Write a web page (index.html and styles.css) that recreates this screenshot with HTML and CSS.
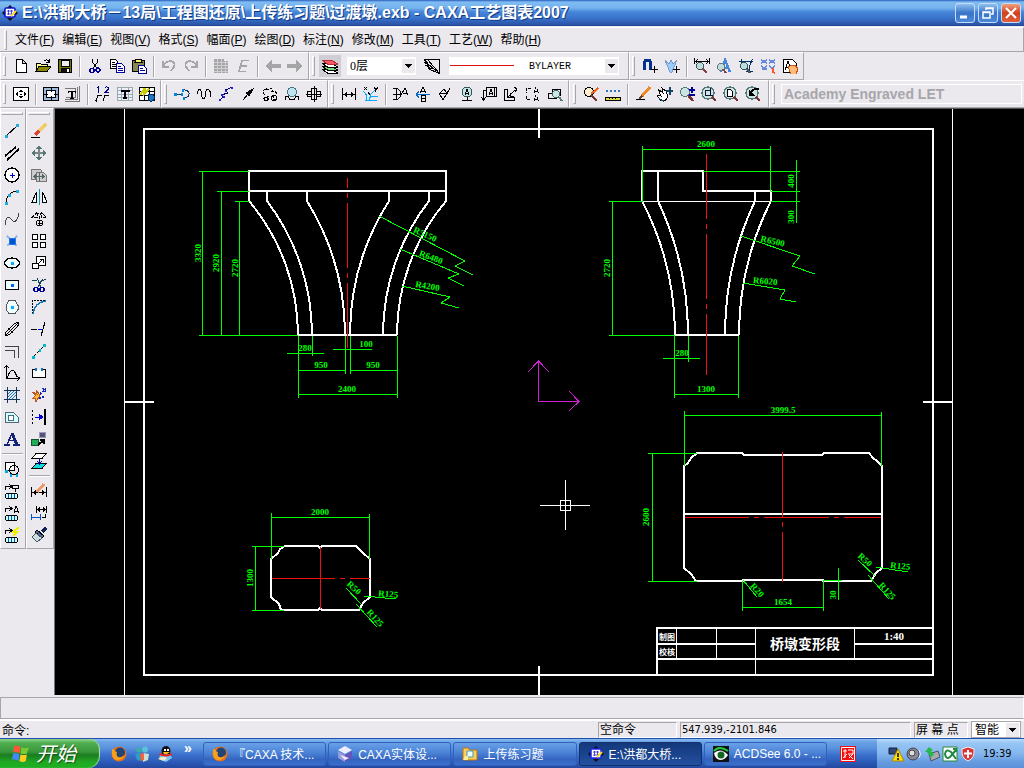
FILE: index.html
```html
<!DOCTYPE html>
<html lang="zh-CN">
<head>
    <meta charset="UTF-8">
    <meta name="viewport" content="width=device-width, initial-scale=1.0">
    <title>CAXA工艺图表2007</title>
    <link rel="stylesheet" href="styles.css">
</head>
<body>
    <!-- 标题栏 -->
    <header class="title-bar">
        <svg class="ic" viewBox="0 0 16 16"><path d="M8 0l3 3H5zM8 16l3-3H5zM0 8l3-3v6zM16 8l-3-3v6z" fill="#111" stroke="none"/><rect x="3" y="3" width="10" height="9" rx="1" fill="#fff" stroke="#11c" stroke-width="1.500"/><path d="M5 6h6M5 9h6M6.500 5v5M9.500 5v5" stroke="#22d" stroke-width=".8"/><path d="M9 11l5-5" stroke="#fd2" stroke-width="2"/></svg>
        <h1>E:\洪都大桥－13局\工程图还原\上传练习题\过渡墩.exb - CAXA工艺图表2007</h1>
        <div class="window-buttons">
            <button aria-label="最小化"><svg class="ic" viewBox="0 0 16 16"><path d="M3 12h7" stroke="#fff" stroke-width="3"/></svg></button>
            <button aria-label="还原"><svg class="ic" viewBox="0 0 16 16"><path d="M6 5V3h7v6h-2M6 3.500h7" stroke="#fff" stroke-width="1.500"/><path d="M3 7h7v6H3zM3 7.500h7" stroke="#fff" stroke-width="1.500"/></svg></button>
            <button class="close" aria-label="关闭"><svg class="ic" viewBox="0 0 16 16"><path d="M3 3l10 10M13 3L3 13" stroke="#fff" stroke-width="2.200"/></svg></button>
        </div>
    </header>

    <!-- 菜单 -->
    <nav class="menu-bar">
        <span class="grip"></span>
        <button>文件(<u>F</u>)</button>
        <button>编辑(<u>E</u>)</button>
        <button>视图(<u>V</u>)</button>
        <button>格式(<u>S</u>)</button>
        <button>幅面(<u>P</u>)</button>
        <button>绘图(<u>D</u>)</button>
        <button>标注(<u>N</u>)</button>
        <button>修改(<u>M</u>)</button>
        <button>工具(<u>T</u>)</button>
        <button>工艺(<u>W</u>)</button>
        <button>帮助(<u>H</u>)</button>
    </nav>

    <!-- 标准 / 属性工具条 -->
    <div class="tool-row">
        <div class="toolbar">
            <span class="grip"></span>
            <button aria-label="新建"><svg class="ic" viewBox="0 0 16 16"><path d="M3.500 1.500h6l4 4v9h-10zM9.500 1.500v4h4" fill="#fff"/></svg></button>
            <button aria-label="打开"><svg class="ic" viewBox="0 0 16 16"><path d="M1 13V5h4l1 1h6v3" fill="#ff9"/><path d="M1 13.500l3-5h12l-4 5z" fill="#880"/><path d="M9 3c2-2 4-1 5 1M14.500 1v3.500H11"/></svg></button>
            <button aria-label="保存"><svg class="ic" viewBox="0 0 16 16"><path d="M1.500 1.500h13v13h-13z" fill="#770"/><path d="M4 2h8v6H4z" fill="#eee"/><path d="M4 10h8v4H4z" fill="#111"/><path d="M10.500 11v3" stroke="#fff" stroke-width="2"/></svg></button>
            <span class="sep"></span>
            <button aria-label="剪切"><svg class="ic" viewBox="0 0 16 16"><path d="M5.500 1v3l4 6M10.500 1v3l-4 6"/><circle cx="5" cy="12.500" r="2" stroke="#009" stroke-width="1.500"/><circle cx="11" cy="12" r="2" stroke="#009" stroke-width="1.500"/></svg></button>
            <button aria-label="复制"><svg class="ic" viewBox="0 0 16 16"><path d="M1.500 1.500h5l2 2v7h-7z" fill="#fff"/><path d="M3 4.500h3M3 6.500h4M3 8.500h4"/><path d="M7.500 5.500h5l3 3v6h-8z" fill="#fff" stroke="#009"/><path d="M9 8.500h3M9 10.500h5M9 12.500h5" stroke="#009"/></svg></button>
            <button aria-label="粘贴"><svg class="ic" viewBox="0 0 16 16"><rect x="1.500" y="2.500" width="12" height="11" fill="#885"/><path d="M4 4.500h7l-1-3H5z" fill="#fe6"/><path d="M7.500 7.500h5l3 3v5h-8z" fill="#fff" stroke="#009"/><path d="M9 10.500h3M9 12.500h5" stroke="#009"/></svg></button>
            <span class="sep"></span>
            <button disabled aria-label="撤消"><svg class="ic" viewBox="0 0 16 16"><path d="M2 3v6h6M2.500 8c2-6 10-6 11-2 1 4-3 5-4 7" stroke="#a5a5a8" stroke-width="1.800"/></svg></button>
            <button disabled aria-label="恢复"><svg class="ic" viewBox="0 0 16 16"><path d="M14 3v6H8M13.500 8c-2-6-10-6-11-2-1 4 3 5 4 7" stroke="#a5a5a8" stroke-width="1.800"/></svg></button>
            <span class="sep"></span>
            <button disabled aria-label="表格"><svg class="ic" viewBox="0 0 16 16"><path d="M1 1h10v2h4v12H1z" fill="#a5a5a8" stroke="none"/><path d="M1 4.500h14M1 7.500h14M1 10.500h14M1 13.500h14M4.500 1v14M8.500 1v14M12.500 3v12" stroke="#ebe9ed" stroke-opacity=".6"/></svg></button>
            <button disabled aria-label="编辑"><svg class="ic" viewBox="0 0 16 16"><path d="M14 2.500H7l-3 11h7M5 8h7" stroke="#a5a5a8" stroke-width="1.800"/></svg></button>
            <span class="sep"></span>
            <button disabled aria-label="后退"><svg class="ic" viewBox="0 0 16 16"><path d="M0 8l7-6v4h9v4H7v4z" fill="#a5a5a8" stroke="none"/></svg></button>
            <button disabled aria-label="前进"><svg class="ic" viewBox="0 0 16 16"><path d="M16 8L9 2v4H0v4h9v4z" fill="#a5a5a8" stroke="none"/></svg></button>
        </div>
        <div class="toolbar">
            <span class="grip"></span>
            <button class="pressed" aria-label="层控制"><svg class="ic" viewBox="0 0 16 16"><path d="M.5 11.500h10l5 3.500h-10z" fill="#fff"/><path d="M.5 8.500h10l5 3.500h-10z" fill="#7d7"/><path d="M.5 5.500h10l5 3.500h-10z" fill="#fff"/><path d="M.5 2.500h10l5 3.500h-10z" fill="#f56" stroke="#a33"/></svg></button>
            <label class="combo layer"><select aria-label="图层"><option>0层</option></select></label>
            <button aria-label="线型"><svg class="ic" viewBox="0 0 16 16"><path d="M0 1.500h15.500v14M0 1.500l3 3H1l4 3H2l5 3H4l11 5M4 2l11 13M3 5l9 8"/></svg></button>
            <label class="combo line-type"><select aria-label="线型选择"><option>BYLAYER</option></select></label>
        </div>
        <div class="toolbar">
            <span class="grip"></span>
            <button aria-label="捕捉"><svg class="ic" viewBox="0 0 16 16"><path d="M2.500 12V5c0-4 6-4 6 0v7" stroke="#00318c" stroke-width="3"/><path d="M12.500 8v7M9 11.500h7"/></svg></button>
            <button aria-label="过滤"><svg class="ic" viewBox="0 0 16 16"><path d="M1 2l5 12h2l5-12-4 4-2-4-2 4z" fill="#9cf" stroke="#79c"/><path d="M12.500 8v7M9 11.500h7"/></svg></button>
            <span class="sep"></span>
            <button aria-label="尺寸查询"><svg class="ic" viewBox="0 0 16 16"><path d="M.5 0v6M15.500 0v6M1 3.500h14M4 1.500l-3 2 3 2M12 1.500l3 2-3 2"/><circle cx="6" cy="8" r="3.500" fill="#bdd" stroke="#455"/><path d="M9 11l4 4" stroke="#844" stroke-width="2"/></svg></button>
            <button aria-label="文字查询"><svg class="ic" viewBox="0 0 16 16"><path d="M5 14L9 2l5 12M7 10h6" stroke="#48d" stroke-width="2.500"/><circle cx="5" cy="9" r="3.500" fill="#bdd" stroke="#677"/><path d="M7 11l3 4" stroke="#844" stroke-width="2"/></svg></button>
            <button aria-label="坐标查询"><svg class="ic" viewBox="0 0 16 16"><path d="M1 3.500h14M3.500 1v4l8 8V8l3-7M8 13.500h7" stroke="#036"/><circle cx="6" cy="8" r="3.500" fill="#bdd" stroke="#455"/><path d="M9 11l3 4" stroke="#555" stroke-width="2"/></svg></button>
            <button aria-label="块属性"><svg class="ic" viewBox="0 0 16 16"><path d="M1 2l3 2 3-2M9 2l3 2 3-2M1 5l3-2 3 2M9 5l3-2 3 2M1 8l3 2 3-2M9 8l3 2 3-2M2 11h5" stroke="#68d" stroke-width="1.500"/><path d="M13 10v4l2 1" stroke="#f52" stroke-width="2"/></svg></button>
            <button aria-label="平移图纸"><svg class="ic" viewBox="0 0 16 16"><path d="M1.500 1.500h9l4 4v9h-13z" fill="#fff"/><path d="M3 12l3-9 2 6M4 9h4"/><path d="M6 9l2-1 5-1 3 4-2 5H9z" fill="#fb7" stroke="#c51"/></svg></button>
        </div>
    </div>

    <!-- 绘图 / 标注 / 视图工具条 -->
    <div class="tool-row">
        <div class="toolbar">
            <span class="grip"></span>
            <button aria-label="图幅"><svg class="ic" viewBox="0 0 16 16"><path d="M.5 1.500h15v13H.5z" fill="#fff"/><path d="M8 3l2.500 3h-5zM8 13l2.500-3h-5zM2 8l3-2.500v5zM14 8l-3-2.500v5z" fill="#000" stroke="none"/><path d="M7 8.500h2"/></svg></button>
            <span class="sep"></span>
            <button aria-label="图框"><svg class="ic" viewBox="0 0 16 16"><path d="M.5 1.500h15v13H.5z" fill="#9bd"/><path d="M3.500 4.500h9v7h-9z" fill="#fff"/><path d="M8.500 2v4M8.500 10v4M1 8.500h4M11 8.500h4"/></svg></button>
            <button aria-label="标题栏"><svg class="ic" viewBox="0 0 16 16"><path d="M14.500 0v15.500H0M12.500 1v12H0M0 2.500h10v9H1" stroke="#777"/><path d="M3.500 7V5.500h7V7M7 5.500V13M5 12.500h4" stroke-width="1.500"/></svg></button>
            <span class="sep"></span>
            <button aria-label="序号"><svg class="ic" viewBox="0 0 16 16"><path d="M2 2l1.500-1v6M10 2c1-2 4-1 3.500 1L10 6.500h4" stroke="#008"/><path d="M1 15l2-5.500h4M8 15l2-5.500h4M0 14l2 2"/></svg></button>
            <button aria-label="明细表"><svg class="ic" viewBox="0 0 16 16"><path d="M.5 1.500h15v13H.5zM1 4.500h14M1 8.500h14M1 11.500h14M4.500 2v12M11.500 2v12" stroke="#9aa" fill="#eef"/><path d="M4.500 6V4.500h7V6M8 4v8M6 12h4" stroke-width="2"/></svg></button>
            <button aria-label="参数栏"><svg class="ic" viewBox="0 0 16 16"><path d="M.5 1.500h15v13H.5zM1 5.500h14M1 9.500h14M5.500 2v12M10.500 2v12" fill="#fff"/><path d="M1 9l5-7-1 6 5-5" stroke="#cc0" stroke-width="2"/><rect x="9" y="8" width="6" height="7" rx="2" fill="#27b" stroke="#026"/></svg></button>
        </div>
        <div class="toolbar">
            <span class="grip"></span>
            <button aria-label="轴"><svg class="ic" viewBox="0 0 16 16"><path d="M1 8.500h8M9 4c8-1 8 8 1 8" stroke="#135"/><path d="M0 8.500h3M7 8.500h2M8 4h2M9 12h2" stroke="#08d" stroke-width="3"/></svg></button>
            <button aria-label="波浪线"><svg class="ic" viewBox="0 0 16 16"><path d="M1.500 8c0-6 4-6 4 0s4 6 4 0 4-6 5-1v4"/></svg></button>
            <button aria-label="双折线"><svg class="ic" viewBox="0 0 16 16"><path d="M1 14l5-3-3-2 7-2-3-3 8-3" stroke="#006"/><path d="M1 14h2M5 11h2M3 9h2M7 5h2M13 2h2" stroke="#22d" stroke-width="2"/></svg></button>
            <button aria-label="箭头"><svg class="ic" viewBox="0 0 16 16"><path d="M3 14l6-7"/><path d="M13 3L6 7l3 3z" fill="#000"/></svg></button>
            <button aria-label="齿轮"><svg class="ic" viewBox="0 0 16 16"><path d="M3 9c-4-4 1-8 3-5 2-4 5-1 4 1 4 0 6 3 3 5M7 10l-2 1 2 2-2 2M11 9v4l3 2M1 13l3-2" stroke-dasharray="3 1"/><circle cx="4" cy="13" r="2"/><circle cx="12" cy="12" r="2.500"/></svg></button>
            <button aria-label="局部放大"><svg class="ic" viewBox="0 0 16 16"><circle cx="8" cy="6" r="4.500" fill="#bfe4ee" stroke="#478"/><path d="M1.500 14v-3.500H4l2 3h4l2-3h2.500V14"/></svg></button>
            <button aria-label="孔/轴"><svg class="ic" viewBox="0 0 16 16"><path d="M5.500 2.500h5v11h-5zM1.500 5.500h4v5h-4zM10.500 5.500h4v5h-4zM8.500 0v16M0 8.500h16"/></svg></button>
        </div>
        <div class="toolbar">
            <span class="grip"></span>
            <button aria-label="尺寸标注"><svg class="ic" viewBox="0 0 16 16"><path d="M1.500 2v12M14.500 2v12M2 8.500h12"/><path d="M2 8.500l4-2.500v5zM14 8.500l-4-2.500v5z" fill="#000" stroke="none"/></svg></button>
            <button aria-label="坐标标注"><svg class="ic" viewBox="0 0 16 16"><path d="M2 14.500h12M3.500 15V9L0 5M6 15l2-7 7-7M8 10.500h7" stroke="#0af"/><path d="M1 1l3 3M4 1L1 4M11 1l2 3M15 1l-3 5M5 6l2 3"/></svg></button>
            <span class="sep"></span>
            <button aria-label="倒角标注"><svg class="ic" viewBox="0 0 16 16"><path d="M0 2.500h3v11H0M3 2.500c6 0 6 11 0 11M0 8.500h9M8 9l4-7 3 7M10 7.500h4"/></svg></button>
            <button aria-label="引出说明"><svg class="ic" viewBox="0 0 16 16"><path d="M5 7l3-6 3 6M6 5.500h4M6.500 9.500h3c2 0 2 3 0 3h-3zM6.500 12.500h3c2 0 2 3 0 3h-3z"/><path d="M1 8.500h14M1 8.500l3-3M1 8.500l3 3" stroke="#06c"/></svg></button>
            <button aria-label="粗糙度"><svg class="ic" viewBox="0 0 16 16"><path d="M2 7l4 7 7-12M3 7.500h8M3 7l4-4 3 4"/></svg></button>
            <button aria-label="基准代号"><svg class="ic" viewBox="0 0 16 16"><circle cx="8" cy="6" r="5" fill="#bde6e8" stroke="#355"/><path d="M6 9l2-6 2 6M7 7.500h3M8.500 11v3M3 14.500h10"/></svg></button>
            <button aria-label="形位公差"><svg class="ic" viewBox="0 0 16 16"><path d="M5.500 1.500h10v9h-10zM8 9l2-6 2 6M9 7.500h3M5 4.500H2.500V14M0 11l2.500 3L5 11M13.500 2v8"/></svg></button>
            <button aria-label="焊接符号"><svg class="ic" viewBox="0 0 16 16"><path d="M1.500 3.500v11h10v-3h-7v-8zM5 11l7-7M7.500 7v3.500H11M11 1l3 2-2 3"/></svg></button>
            <button aria-label="剖切符号"><svg class="ic" viewBox="0 0 16 16"><path d="M6 2.500H1.500V7M1.500 10v3.500H6M9 7l2-6 3 6M10 5.500h3M9 15l2-6 3 6M10 13.500h3" stroke-dasharray="3 1"/></svg></button>
            <button aria-label="标注查看"><svg class="ic" viewBox="0 0 16 16"><path d="M1.500 7.500h8v5h-8zM5.500 8V3.500h8V10"/><circle cx="9" cy="8" r="3.800" fill="#cbe5e5" stroke="#466"/><path d="M12 11l3 4" stroke="#577" stroke-width="2"/></svg></button>
        </div>
        <div class="toolbar view-bar">
            <span class="grip"></span>
            <button aria-label="重画"><svg class="ic" viewBox="0 0 16 16"><circle cx="6" cy="6" r="4.500" fill="#fff0d0"/><path d="M8 9l6 6" stroke="#733" stroke-width="2.500"/><path d="M15 2l-4 4-3 1" stroke="#e62" stroke-width="2"/></svg></button>
            <button aria-label="线型比例"><svg class="ic" viewBox="0 0 16 16"><path d="M1 5h15" stroke="#37b" stroke-width="2" stroke-dasharray="2 2"/><path d="M.5 11.500h15v3H.5z" fill="#dd4"/><path d="M4.500 11v2M7.500 11v2M10.500 11v2"/></svg></button>
            <span class="sep"></span>
            <button aria-label="画笔"><svg class="ic" viewBox="0 0 16 16"><path d="M1 14c4-1 6 1 9-1"/><path d="M15 1L7 10" stroke="#e82" stroke-width="3"/><path d="M7 10l-3 3" stroke="#643" stroke-width="2"/></svg></button>
            <button aria-label="平移"><svg class="ic" viewBox="0 0 16 16"><path d="M1 3l5 4-1-5 4 3 2 6-3 4-5-1-3-5 4 1z" fill="#fff"/><path d="M13 1v8M9 5h7M2 13l5 2" stroke="#146" stroke-width="1.500"/></svg></button>
            <button aria-label="缩放"><svg class="ic" viewBox="0 0 16 16"><circle cx="6" cy="6" r="4.500" fill="#cbe5e5" stroke="#577"/><path d="M9 9l5 6" stroke="#733" stroke-width="2.500"/><path d="M13 1v6M10 4h6M10 9h6" stroke="#009" stroke-width="1.500"/></svg></button>
            <button aria-label="窗口放大"><svg class="ic" viewBox="0 0 16 16"><circle cx="7" cy="7" r="6" fill="#cbe5e5" stroke="#577" stroke-width="1.500"/><path d="M4.500 4.500h5v5h-5zM9.500 2v3M9 9.500h3" stroke="#113"/><path d="M11 11l4 4" stroke="#733" stroke-width="2.500"/></svg></button>
            <button aria-label="显示全部"><svg class="ic" viewBox="0 0 16 16"><circle cx="7" cy="7" r="6" fill="#cbe5e5" stroke="#577" stroke-width="1.500"/><path d="M4.500 3.500h3l2 2v5h-5z" fill="#fff"/><path d="M11 11l4 4" stroke="#733" stroke-width="2.500"/></svg></button>
            <button aria-label="显示上一步"><svg class="ic" viewBox="0 0 16 16"><circle cx="7" cy="7" r="6" fill="#cbe5e5" stroke="#577" stroke-width="1.500"/><path d="M4 4v5h5z" fill="#000"/><path d="M6 7c2-4 5-5 8-4" stroke-width="2"/><path d="M11 11l4 4" stroke="#733" stroke-width="2.500"/></svg></button>
        </div>
        <div class="toolbar font-bar">
            <span class="grip"></span>
            <input type="text" value="Academy Engraved LET" aria-label="字体" disabled>
        </div>
    </div>

    <main class="workspace">
        <!-- 左侧绘图工具 -->
        <div class="side-bar">
            <span class="grip"></span>
            <button aria-label="直线"><svg class="ic" viewBox="0 0 16 16"><path d="M2 13L14 2"/><path d="M1 13.500h3M12 2.500h3" stroke="#2ad" stroke-width="3"/></svg></button>
            <button aria-label="平行线"><svg class="ic" viewBox="0 0 16 16"><path d="M1 11L12 2M3 15L15 4" stroke-width="1.700"/></svg></button>
            <button aria-label="圆"><svg class="ic" viewBox="0 0 16 16"><circle cx="8" cy="8" r="7" fill="#fff" stroke-width="1.300"/><path d="M8.500 6v5M6 8.500h5" stroke="#00c"/></svg></button>
            <button aria-label="圆弧"><svg class="ic" viewBox="0 0 16 16"><path d="M2 14C2 7 7 2 14 2"/><path d="M1 14h3M4 6h3M12 2h3" stroke="#2ad" stroke-width="3"/></svg></button>
            <button aria-label="样条"><svg class="ic" viewBox="0 0 16 16"><path d="M1 14C2 5 5 5 8 9s6-1 7-7" stroke="#444"/></svg></button>
            <button aria-label="点"><svg class="ic" viewBox="0 0 16 16"><path d="M3 3l10 10M13 3L3 13" stroke="#9be" stroke-width="2"/><path d="M5 5h6v6H5z" fill="#05c" stroke="#27e"/></svg></button>
            <button aria-label="椭圆"><svg class="ic" viewBox="0 0 16 16"><ellipse cx="8" cy="8" rx="7.500" ry="5" fill="#eff" stroke-width="1.300"/><path d="M6.500 8h3" stroke="#1af" stroke-width="3"/></svg></button>
            <button aria-label="矩形"><svg class="ic" viewBox="0 0 16 16"><path d="M1.500 3.500h13v9h-13z" fill="#eff"/><path d="M6.500 8h3" stroke="#06e" stroke-width="3"/></svg></button>
            <button aria-label="正多边形"><svg class="ic" viewBox="0 0 16 16"><path d="M5 1.500h6l3 5v4l-3 4H5l-3-4v-4z" fill="#eff" stroke="#555"/><path d="M6.500 8h3" stroke="#1af" stroke-width="3"/></svg></button>
            <button aria-label="中心线"><svg class="ic" viewBox="0 0 16 16"><path d="M3 10l7-7c4-3 6 0 3 3l-7 7c-4 3-6 0-3-3zM1 15L15 1M4 7l5 5"/></svg></button>
            <button aria-label="等距线"><svg class="ic" viewBox="0 0 16 16"><path d="M1 3.500h13.500V15M1 7.500h9.500V15" stroke="#444"/></svg></button>
            <button aria-label="公式曲线"><svg class="ic" viewBox="0 0 16 16"><path d="M2.500 1v12.500H15M0 3l2.500-2L5 3M13 11l3 2.500-3 2M3 14c3-11 7-11 10-2"/></svg></button>
            <button aria-label="剖面线"><svg class="ic" viewBox="0 0 16 16"><path d="M3.500 0v16M12.500 0v16M0 3.500h16M0 12.500h16" stroke="#135"/><path d="M4 7l3-3M4 10l6-6M5 12l7-7M8 12l4-4" stroke="#17b"/></svg></button>
            <button aria-label="填充"><svg class="ic" viewBox="0 0 16 16"><path d="M1.500 3.500h8l5 5v5h-13z" fill="#cff" stroke="#567"/><circle cx="7" cy="9" r="3" fill="#fff" stroke="#567"/></svg></button>
            <button aria-label="文字"><svg class="ic" viewBox="0 0 16 16"><path d="M8 2l5 12" stroke="#127" stroke-width="3"/><path d="M3 14L8 2M5 9.500h6M0 14h6M9 14h7" stroke="#127" stroke-width="1.500"/></svg></button>
            <span class="sep"></span>
            <button aria-label="块生成"><svg class="ic" viewBox="0 0 16 16"><path d="M1.500 1.500h9v8h-9z" fill="#fff"/><circle cx="10" cy="9" r="4.500"/><path d="M1 10h3M6 14h2M12 14h2" stroke="#0ad" stroke-width="3"/></svg></button>
            <button aria-label="提取图符"><svg class="ic" viewBox="0 0 16 16"><path d="M1.500 7V3.500H7M5 1l3 2.500L5 6M8.500 2.500h6v3h-6zM11.500 6v3"/><rect x="1.500" y="10.500" width="12" height="5" rx="2" fill="#cff"/><path d="M4.500 11v4M7.500 11v4M10.500 11v4" stroke="#05a"/></svg></button>
            <button aria-label="技术要求"><svg class="ic" viewBox="0 0 16 16"><path d="M1.500 7V3.500H7M5 1l3 2.500L5 6M10 8l2-7 3 7M11 6h4"/><rect x="1.500" y="10.500" width="12" height="5" rx="2" fill="#cff"/><path d="M4.500 11v4M7.500 11v4M10.500 11v4" stroke="#05a"/></svg></button>
            <button aria-label="构件库"><svg class="ic" viewBox="0 0 16 16"><path d="M1.500 7V3.500H7M5 1l3 2.500L5 6"/><path d="M15 0l-6 5h4l-4 4" stroke="#ee0" stroke-width="2"/><rect x="1.500" y="10.500" width="12" height="5" rx="2" fill="#cff"/><path d="M4.500 11v4M7.500 11v4M10.500 11v4" stroke="#05a"/></svg></button>
        </div>

        <!-- 左侧修改工具 -->
        <div class="side-bar">
            <span class="grip"></span>
            <button aria-label="删除"><svg class="ic" viewBox="0 0 16 16"><path d="M0 14.500h9"/><path d="M15 1L7 9" stroke="#ec6" stroke-width="4"/><path d="M8 8l-4 4" stroke="#d43" stroke-width="4"/></svg></button>
            <button aria-label="平移"><svg class="ic" viewBox="0 0 16 16"><path d="M8 3v10M3 8h10" stroke="#788" stroke-width="2"/><path d="M8 0l3 4H5zM8 16l3-4H5zM0 8l4-3v6zM16 8l-4-3v6z" fill="#577" stroke="none"/></svg></button>
            <button aria-label="复制移动"><svg class="ic" viewBox="0 0 16 16"><path d="M.5 2.500h9l2 3h-6v7h-5zM5.500 5.500h7l3 3v6h-10z" fill="#ccc" stroke="#777"/><path d="M8.500 5v9M3 9.500h10M5 7.500l-2 2 2 2M11 7.500l2 2-2 2" stroke="#566"/></svg></button>
            <button aria-label="镜像"><svg class="ic" viewBox="0 0 16 16"><path d="M5.500 3v10H1zM11.500 3v10H16z" fill="#eff"/><path d="M8.500 0v16" stroke="#09a"/></svg></button>
            <button aria-label="旋转"><svg class="ic" viewBox="0 0 16 16"><path d="M1 6.500l5-5v5zM10.500 1.500l5 5h-5zM6 4c2-4 4-2 4 0M8.500 5v4" stroke-dasharray="3 1"/><circle cx="8.500" cy="12" r="3"/><path d="M8.500 10v4M7 12h4"/></svg></button>
            <button aria-label="阵列"><svg class="ic" viewBox="0 0 16 16"><path d="M1.500 1.500h5v5h-5zM9.500 1.500h5v5h-5zM1.500 9.500h5v5h-5zM9.500 9.500h5v5h-5z" fill="#fff"/></svg></button>
            <button aria-label="比例缩放"><svg class="ic" viewBox="0 0 16 16"><path d="M5.500 1.500h9v9h-9z" fill="#fff"/><path d="M1.500 8.500h6v5h-6z" fill="#fff"/><path d="M8 8l4-4M9 4.500h3v3"/></svg></button>
            <button aria-label="裁剪"><svg class="ic" viewBox="0 0 16 16"><path d="M1 3.500h5M9 5l6-3M6 1l4 9M12 2l-5 8" stroke="#145"/><circle cx="5" cy="12.500" r="2" stroke="#009" stroke-width="1.500"/><circle cx="11" cy="12.500" r="2" stroke="#009" stroke-width="1.500"/></svg></button>
            <button aria-label="过渡"><svg class="ic" viewBox="0 0 16 16"><path d="M1.500 15V1.500H15" stroke-dasharray="2 1"/><path d="M2 15C3 7 7 3 15 2" stroke="#17b" stroke-width="1.500"/></svg></button>
            <button aria-label="齐边"><svg class="ic" viewBox="0 0 16 16"><path d="M0 8.500h6M14 1l-4 14"/><path d="M7 8.500h4" stroke="#00c"/></svg></button>
            <button aria-label="拉伸"><svg class="ic" viewBox="0 0 16 16"><path d="M2 14L14 2" stroke-dasharray="4 1"/><path d="M1 14h3M8 7h2M12 2.500h3" stroke="#0bc" stroke-width="3"/></svg></button>
            <button aria-label="打断"><svg class="ic" viewBox="0 0 16 16"><path d="M5 4.500H1.500v8h13v-8H11" fill="#fff"/><path d="M5 3v3M11 3v3" stroke="#17b" stroke-width="2"/></svg></button>
            <button aria-label="打散"><svg class="ic" viewBox="0 0 16 16"><path d="M1 5l5 2-1-4 4 5-4 7-1-4-3 1 4-4z" fill="#fb3" stroke="#b52"/><path d="M9 7l6-5M12 1l3 5M8 11l6-1" stroke="#12b" stroke-width="2" stroke-dasharray="2 1"/></svg></button>
            <button aria-label="延伸"><svg class="ic" viewBox="0 0 16 16"><path d="M14 0v16" stroke-width="2"/><path d="M1.500 1v14" stroke-dasharray="2 2"/><path d="M4 8h4V5l4 3-4 3V8" fill="#00d" stroke="#00d"/></svg></button>
            <button aria-label="格式刷"><svg class="ic" viewBox="0 0 16 16"><path d="M.5 8.500h7v6h-7z" fill="#2a5" stroke="#153"/><path d="M8.500 1.500h6v5h-6z" fill="#557" stroke="#99b"/><path d="M7 14l6-5M9 9h4v4" stroke-width="2"/></svg></button>
            <button aria-label="块消隐"><svg class="ic" viewBox="0 0 16 16"><path d="M5 .5h10l-4 5H1z" fill="#fff"/><path d="M5 10.500h10l-4 5H1z" fill="#1dd"/><path d="M8.500 5v6M6 8l2.500 3L11 8" stroke="#008"/></svg></button>
            <span class="sep"></span>
            <button aria-label="标注编辑"><svg class="ic" viewBox="0 0 16 16"><path d="M.5 4v10M15.500 4v10M1 9.500h14"/><path d="M1 9.500L5 7v5zM15 9.500L11 7v5z" fill="#000" stroke="none"/><path d="M13 1L6 9" stroke="#e96" stroke-width="3"/></svg></button>
            <button aria-label="尺寸驱动"><svg class="ic" viewBox="0 0 16 16"><path d="M5.500 1v7M15.500 1v7M6 4.500h9M14.500 9v3H11"/><path d="M6 4.500L9 2v5zM15 4.500L12 2v5z" fill="#000" stroke="none"/><path d="M.5 9v6M9.500 9v6M1 12.500h8" stroke="#05c"/></svg></button>
            <button aria-label="特性匹配"><svg class="ic" viewBox="0 0 16 16"><path d="M15 1l-4 4" stroke="#125" stroke-width="3"/><path d="M6 3l7 6-2 2-7-6z" fill="#569"/><path d="M5 6l6 5-5 4-5-5z" fill="#cdd" stroke="#456"/></svg></button>
        </div>

        <!-- 绘图区 -->
        <svg class="drawing" viewBox="55 109 969 586" preserveAspectRatio="xMidYMid meet">
            <defs>
                <marker id="arrow" viewBox="0 0 6 4" refX="6" refY="2" markerWidth="6" markerHeight="4" orient="auto-start-reverse"><path d="M0 0h2l4 2-4 1z" fill="#0f0" stroke="none"/></marker>
            </defs>

            <!-- 图框 -->
            <g class="thin">
                <path d="M124.500 109V695M952.500 109V695"/>
                <path d="M676.500 628V659M716.500 628V659M755.500 628V675M854.500 628V659"/>
            </g>
            <g class="bold">
                <path d="M144 129H933V675H144Z"/>
                <path d="M539 109V138M539 666V695M125 402H154M923 402H952"/>
                <path d="M657 675V628H933M657 644H755M854 644H933M657 659H933"/>
            </g>
            <g class="block-text">
                <text x="667" y="640" class="small">制图</text>
                <text x="667" y="655" class="small">校核</text>
                <text x="805" y="649">桥墩变形段</text>
                <text x="894" y="640" class="scale">1:40</text>
            </g>

            <!-- 正视图 -->
            <g class="bold">
                <path d="M249 201V171H446V201M249 191H446M267 191V201M307 191V201M389 191V201M429 191V201"/>
                <path d="M249 201A208 208 0 0 1 298 335M267 201A222 222 0 0 1 312 335M307 201A255 255 0 0 1 345 335"/>
                <path d="M389 201A250 250 0 0 0 350 335M429 201A218 218 0 0 0 383 335M446 201A208 208 0 0 0 397 335M298 335H397"/>
            </g>
            <path class="axis" d="M347.500 178V188M347.500 193V198M347.500 203V268M347.500 273V278M347.500 283V348"/>
            <g class="dim">
                <path d="M199 171.500H249M217 191.500H249M235 201.500H249M199 335.500H298"/>
                <path d="M298.500 336V398M312.500 336V356M345.500 336V374M350.500 336V374M397.500 336V398"/>
                <path d="M287 353.500H324M333 349.500H372"/>
                <path class="arrows" d="M202.500 171V335"/><path class="arrows" d="M221.500 191V335"/><path class="arrows" d="M239.500 201V335"/>
                <path class="arrows" d="M299 370.500H345"/><path class="arrows" d="M351 370.500H397"/><path class="arrows" d="M299 394.500H397"/>
                <path d="M379 216L465 261 455 266 473 275M400 249L459 274 448 278 464 286M402 286L450 297 441 303 459 308"/>
            </g>
            <g class="dim-text">
                <text transform="translate(201 253) rotate(-90)">3320</text>
                <text transform="translate(219 263) rotate(-90)">2920</text>
                <text transform="translate(238 268) rotate(-90)">2720</text>
                <text x="305" y="351">280</text><text x="366" y="347">100</text>
                <text x="321" y="368">950</text><text x="373" y="368">950</text><text x="347" y="392">2400</text>
                <text transform="translate(424 237) rotate(24)">R5150</text>
                <text transform="translate(430 260) rotate(20)">R6480</text>
                <text transform="translate(427 289) rotate(9)">R4200</text>
            </g>

            <!-- 侧视图 -->
            <g class="bold">
                <path d="M642 201V171H703V191H771V201M658 171V201M755 191V201"/>
                <path d="M642 201A289 289 0 0 1 675 335M658 201A314 314 0 0 1 688 335M755 201A314 314 0 0 0 725 335M771 201A297 297 0 0 0 739 335M675 335H739"/>
            </g>
            <path class="thin" d="M642 201.500H771"/>
            <path class="axis" d="M706.500 154V219M706.500 224V229M706.500 234V299M706.500 304V309M706.500 314V375"/>
            <g class="dim">
                <path d="M642.500 146V202M770.500 146V191M703 171.500H800M771 191.500H800M771 201.500H800M609 201.500H642M609 335.500H675"/>
                <path d="M674.500 336V398M688.500 336V362M738.500 336V398M663 358.500H700"/>
                <path class="arrows" d="M643 149.500H770"/><path class="arrows" d="M612.500 201V335"/><path class="arrows" d="M675 394.500H738"/>
                <path d="M796.500 160V223"/>
                <path d="M741 236L800 256 792 266 815 274M743 283L785 290 780 299 796 302"/>
            </g>
            <g class="dim-text">
                <text x="706" y="147">2600</text>
                <text transform="translate(794 181) rotate(-90)">400</text>
                <text transform="translate(794 217) rotate(-90)">300</text>
                <text transform="translate(610 268) rotate(-90)">2720</text>
                <text x="682" y="356">280</text><text x="706" y="392">1300</text>
                <text transform="translate(772 244) rotate(13)">R6500</text>
                <text transform="translate(765 284) rotate(5)">R6020</text>
            </g>

            <!-- 俯视图 -->
            <path class="bold" d="M684 466L688 463 691 458 697 453H742L744 455H822L824 453H869L873 458 877 461 882 466V568L876 573 871 581H823V580H743V581H696L691 574 684 568Z"/>
            <path class="bold" d="M684 514H882"/>
            <path class="axis" d="M782.500 452V517M782.500 522V527M782.500 532V582M685 517.500H749M754 517.500H759M764 517.500H829M834 517.500H839M844 517.500H881"/>
            <g class="dim">
                <path d="M684.500 411V466M881.500 412V466M648 453.500H697M648 581.500H697M742.500 581V611M823.500 581V611M838.500 568V600M823 580.500H842"/>
                <path class="arrows" d="M685 415.500H881"/><path class="arrows" d="M652.500 454V581"/><path class="arrows" d="M743 607.500H823"/>
                <path d="M743 580L757 597M858 560L875 576M876 567L908 572M868 575L889 599"/>
            </g>
            <g class="dim-text">
                <text x="783" y="413">3999.5</text>
                <text transform="translate(649 517) rotate(-90)">2600</text>
                <text x="783" y="605">1654</text>
                <text transform="translate(836 595) rotate(-90)">30</text>
                <text transform="translate(755 592) rotate(48)">R20</text>
                <text transform="translate(863 562) rotate(42)">R50</text>
                <text transform="translate(900 569) rotate(6)">R125</text>
                <text transform="translate(885 593) rotate(48)">R125</text>
            </g>

            <!-- 底视图 -->
            <path class="bold" d="M271 559L278 553 280 549 285 546H318L320 548 322 546H356L363 553 370 559V597L363 603 359 610H322L320 608 318 610H281L279 604 271 597Z"/>
            <path class="axis" d="M320.500 547V609M272 578.500H335M340 578.500H345M350 578.500H370"/>
            <g class="dim">
                <path d="M271.500 513V559M369.500 514V559M252 546.500H284M252 610.500H284"/>
                <path class="arrows" d="M272 517.500H369"/><path class="arrows" d="M255.500 547V610"/>
                <path d="M346 588L361 604M364 596L396 599M356 604L377 627"/>
            </g>
            <g class="dim-text">
                <text x="320" y="515">2000</text>
                <text transform="translate(253 578) rotate(-90)">1300</text>
                <text transform="translate(352 590) rotate(42)">R50</text>
                <text transform="translate(388 597) rotate(5)">R125</text>
                <text transform="translate(373 620) rotate(48)">R125</text>
            </g>

            <!-- 坐标系与光标 -->
            <path class="ucs" d="M538.500 401.500V362M528 372L538.500 361 549 372M538.500 401.500H579M569 391L579 401.500 569 411"/>
            <path class="thin" d="M540 505.500H590M565.500 480V530M560.500 500.500H570.500V510.500H560.500Z"/>
        </svg>
    </main>

    <div class="message-pane"></div>

    <footer class="status-bar">
        <span class="prompt">命令:</span>
        <span class="cell command">空命令</span>
        <span class="cell coords">547.939,-2101.846</span>
        <span class="cell point">屏 幕 点</span>
        <label class="combo snap"><select aria-label="捕捉方式"><option>智能</option></select></label>
    </footer>

    <!-- 任务栏 -->
    <div class="taskbar">
        <button class="start">
            <svg class="ic" viewBox="0 0 18 18"><path d="M3 2q3-1 6 1L8 9Q5 7 2 8z" fill="#f53"/><path d="M10 3q3 2 7 0l-2 6q-3 1-6 0z" fill="#7c3"/><path d="M2 9q3-1 6 1l-1 6q-3-2-6-1z" fill="#48f"/><path d="M9 10q3 1 6 0l-1 6q-3 2-6 0z" fill="#fc2"/></svg>
            开始
        </button>
        <div class="quick-launch">
            <button aria-label="Firefox"><svg class="ic" viewBox="0 0 16 16"><circle cx="8" cy="8" r="7.500" fill="#e7701a"/><circle cx="9" cy="6.500" r="5" fill="#247"/><path d="M1 3c4 0 2 3 5 3-2 6 4 7 7 3-1 6-11 8-12-1z" fill="#f9a01b"/></svg></button>
            <button aria-label="MSN"><svg class="ic" viewBox="0 0 16 16"><circle cx="5" cy="4" r="2.500" fill="#3ab0a0"/><circle cx="11" cy="3.500" r="3" fill="#5ac0dc"/><path d="M1 8l5-1 1 8-4-1z" fill="#2a9dc8"/><path d="M9 7l6 1-1 6-5 2z" fill="#cfe0d0"/><path d="M6 8l4-1v7l-3 1z" fill="#f0653a"/></svg></button>
            <button aria-label="QQ"><svg class="ic" viewBox="0 0 16 16"><ellipse cx="9" cy="5" rx="4.500" ry="5" fill="#111"/><path d="M7 3h2v2H7zM10 3h2v2h-2z" fill="#fff"/><path d="M3 9l10-1 2 4-6 4-7-3z" fill="#7ac8f8"/><path d="M6 6h7l-3 2H7z" fill="#fb1"/><path d="M3 7q6 3 12 0v2Q9 12 2 9z" fill="#e22"/><path d="M1 13q5-4 9-1l-3 3z" fill="#f6e8c0"/></svg></button>
            <span class="more">»</span>
        </div>
        <div class="tasks">
            <button><svg class="ic" viewBox="0 0 16 16"><circle cx="8" cy="8" r="7.500" fill="#e7701a"/><circle cx="9" cy="6.500" r="5" fill="#247"/><path d="M1 3c4 0 2 3 5 3-2 6 4 7 7 3-1 6-11 8-12-1z" fill="#f9a01b"/></svg><span>『CAXA 技术...</span></button>
            <button><svg class="ic" viewBox="0 0 16 16"><path d="M8 0l7 4-7 4-7-4z" fill="#eef"/><path d="M1 5l7 4v7l-7-4z" fill="#99d"/><path d="M15 5L8 9v7l7-4z" fill="#65b"/><path d="M3 9l9 3-4 2z" fill="#eef"/></svg><span>CAXA实体设...</span></button>
            <button><svg class="ic" viewBox="0 0 16 16"><path d="M1 2h5l2 2h7v10H1z" fill="#fc5" stroke="#b71"/><path d="M5 5h6v6H5z" fill="#eff" stroke="#49b"/><path d="M1 14l2-4h3v4z" fill="#fe9"/></svg><span>上传练习题</span></button>
            <button class="current"><svg class="ic" viewBox="0 0 16 16"><path d="M8 0l3 3H5zM8 16l3-3H5zM0 8l3-3v6zM16 8l-3-3v6z" fill="#111"/><rect x="3" y="3" width="10" height="9" rx="1" fill="#fff" stroke="#22e" stroke-width="1.500"/><path d="M5 6h6M5 9h6M6.500 5v5M9.500 5v5" stroke="#22d" stroke-width=".8"/><path d="M9 11l5-5" stroke="#fd2" stroke-width="2"/></svg><span>E:\洪都大桥...</span></button>
            <button><svg class="ic" viewBox="0 0 16 16"><path d="M0 0h16v16H0z" fill="#111"/><path d="M1 7q7-6 14 2-3 5-8 5-5-1-6-7z" fill="#fff"/><circle cx="8" cy="9" r="3.500" fill="#162"/><path d="M1 5q5-6 14 0" stroke="#2c4" stroke-width="2" fill="none"/></svg><span>ACDSee 6.0 - ...</span></button>
        </div>
        <button class="ime" aria-label="输入法"><svg class="ic" viewBox="0 0 16 16"><path d="M0 0h16v16H0z" fill="#e11"/><path d="M1.500 1.500h13v13h-13zM3 5h4M5 3v9M3 12l4-4M8 4h5v4M8 8h5l-4 4M9 9l4 4" stroke="#fff" fill="none"/></svg></button>
        <div class="tray">
            <svg class="ic" viewBox="0 0 16 16"><path d="M1 2h8v6H1z" fill="#347" stroke="#124"/><path d="M10 3l6 12H4z" fill="#fd1" stroke="#a80"/><path d="M10 7v4M10 12v2" stroke="#000" stroke-width="1.500"/></svg>
            <svg class="ic" viewBox="0 0 16 16"><circle cx="7" cy="8" r="6" fill="#889" stroke="#445"/><circle cx="6" cy="7" r="3" fill="#ddd" stroke="#444"/><path d="M13 4q3 4 0 8" stroke="#eee" fill="none"/></svg>
            <svg class="ic" viewBox="0 0 16 16"><path d="M5 8l9-3 2 6-9 4z" fill="#aaa" stroke="#456"/><path d="M1 6l4-5 4 3-2 1 3 4-3 2-4-5z" fill="#2b4"/></svg>
            <svg class="ic" viewBox="0 0 16 16"><path d="M1 1h14v14H1z" fill="#fff" stroke="#283"/><path d="M14 4L8 11q-4 3-5-3 1-6 6-2l5 7M11 3h3v3" stroke="#284" stroke-width="2" fill="none"/></svg>
            <svg class="ic" viewBox="0 0 16 16"><path d="M8 1l6 2q1 9-6 12Q1 12 2 3z" fill="#d33" stroke="#eee"/><path d="M8 4v8M4 7.500h8" stroke="#fff" stroke-width="2"/></svg>
            <time>19:39</time>
        </div>
    </div>
</body>
</html>
```
FILE: styles.css
```css
* {
    margin: 0;
    padding: 0;
    box-sizing: border-box;
}

body {
    display: flex;
    flex-direction: column;
    height: 100vh;
    overflow: hidden;
    background: #ebe9ed;
    color: #000;
    font-family: "Liberation Sans", "Noto Sans CJK SC", sans-serif;
    font-size: 12px;
}

button {
    border: 0;
    background: none;
    color: inherit;
    font: inherit;
}

.ic {
    display: block;
    flex: none;
    width: 16px;
    height: 16px;
    fill: none;
    stroke: #000;
}

.toolbar .ic,
.side-bar .ic {
    shape-rendering: crispEdges;
}

/* 标题栏 */
.title-bar {
    display: flex;
    align-items: center;
    flex: none;
    height: 27px;
    padding: 0 3px 2px 2px;
    gap: 4px;
    background: linear-gradient(#2a5fc0 0, #7fbcf2 2px, #74b2ee 8px, #4585d8 12px, #3a74cc 18px, #2c56ab 24px, #24479a 26px, #ebe9ed 26px);
    color: #fff;
}

.title-bar h1 {
    flex: 1;
    font-family: "Liberation Sans", "Noto Sans CJK SC", sans-serif;
    font-size: 16px;
    line-height: 24px;
    font-weight: 700;
    white-space: nowrap;
    text-shadow: 1px 1px 0 #123a80;
}

.window-buttons {
    display: flex;
    gap: 3px;
}

.window-buttons button {
    display: flex;
    align-items: center;
    justify-content: center;
    width: 20px;
    height: 20px;
    border: 1px solid #c4dcf8;
    border-radius: 3px;
    background: linear-gradient(#8fc0f0, #3a74c8 50%, #4a8ad8);
}

.window-buttons .close {
    background: linear-gradient(#f0a080, #d0401c 50%, #e0603c);
}

/* 菜单 */
.menu-bar {
    display: flex;
    align-items: center;
    flex: none;
    height: 25px;
    padding-left: 4px;
    border-top: 1px solid #fff;
    border-right: 1px solid #a7a6aa;
    border-bottom: 1px solid #a7a6aa;
}

.menu-bar button {
    min-width: 47px;
    padding: 0 4px;
    line-height: 20px;
    white-space: nowrap;
}

.grip {
    flex: none;
    width: 3px;
    height: 20px;
    margin-right: 4px;
    border: 1px solid;
    border-color: #fff #a7a6aa #a7a6aa #fff;
}

/* 工具条 */
.tool-row {
    display: flex;
    flex: none;
    height: 28px;
}

.toolbar {
    display: flex;
    align-items: center;
    padding: 0 2px;
    border: 1px solid;
    border-color: #fff #a7a6aa #a7a6aa #fff;
}

.toolbar button,
.side-bar button {
    display: flex;
    align-items: center;
    justify-content: center;
    flex: none;
    width: 22px;
    height: 22px;
}

.toolbar .pressed {
    background: #d0ced4;
}

.toolbar .sep {
    flex: none;
    width: 2px;
    height: 21px;
    margin: 0 3px;
    background: linear-gradient(90deg, #a7a6aa 50%, #fff 50%);
}

.combo {
    position: relative;
    flex: none;
    height: 18px;
    background: #fff;
}

.combo select {
    width: 100%;
    height: 100%;
    padding-left: 3px;
    border: 0;
    border-radius: 0;
    background: transparent;
    color: #000;
    font-family: "Liberation Serif", "Noto Sans CJK SC", serif;
    font-size: 12px;
    appearance: none;
}

/* 下拉按钮 */
.combo::after {
    content: "";
    position: absolute;
    top: 2px;
    right: 1px;
    width: 13px;
    height: 14px;
    background: linear-gradient(#000, #000) center 5px / 7px 1px no-repeat,
        linear-gradient(#000, #000) center 6px / 5px 1px no-repeat,
        linear-gradient(#000, #000) center 7px / 3px 1px no-repeat,
        linear-gradient(#000, #000) center 8px / 1px 1px no-repeat, #ebe9ed;
    pointer-events: none;
}

.combo.layer {
    width: 69px;
    margin: 0 5px 0 6px;
}

.combo.line-type {
    width: 170px;
    margin: 0 7px 0 6px;
}

.combo.line-type select {
    padding-left: 80px;
    background: linear-gradient(#e01010, #e01010) 1px 8px / 64px 1px no-repeat;
    font-family: "Liberation Mono", monospace;
    font-size: 10px;
}

.view-bar {
    padding: 0 4px 0 3px;
}

.font-bar {
    flex: 1;
    border-right: 0;
}

.font-bar input {
    flex: 1;
    min-width: 0;
    height: 20px;
    margin-left: 2px;
    padding-left: 2px;
    border: 1px solid #fff;
    background: #ebe9ed;
    color: #a7a6aa;
    font-family: "Liberation Sans", sans-serif;
    font-size: 14px;
    font-weight: 700;
}

/* 工作区 */
.workspace {
    display: flex;
    flex: 1;
    min-height: 0;
}

.side-bar {
    display: flex;
    flex-direction: column;
    align-items: center;
    align-self: flex-start;
    flex: none;
    width: 26px;
    height: 441px;
    padding: 3px 2px 0 0;
    border: 1px solid;
    border-color: #fff #a7a6aa #a7a6aa #fff;
}

.side-bar + .side-bar {
    width: 28px;
}

.side-bar .grip {
    width: 22px;
    height: 3px;
    margin: 0 0 5px;
}

.side-bar .sep {
    flex: none;
    width: 21px;
    height: 2px;
    margin: 3px 0;
    background: linear-gradient(#a7a6aa 50%, #fff 50%);
}

.drawing {
    flex: 1;
    min-width: 0;
    border-top: 1px solid #55555a;
    border-left: 1px solid #77777c;
    background: #000;
    shape-rendering: crispEdges;
}

.drawing path {
    fill: none;
    stroke-width: 1;
}

.drawing .thin,
.drawing .thin path {
    stroke: #fff;
}

.drawing .bold,
.drawing .bold path {
    stroke: #fff;
    stroke-width: 2;
}

.drawing .axis {
    stroke: #f01010;
}

.drawing .ucs {
    stroke: #d020d0;
}

.drawing .dim path {
    stroke: #0f0;
}

.drawing .dim .arrows {
    marker-start: url(#arrow);
    marker-end: url(#arrow);
}

.dim-text {
    fill: #0f0;
    font-family: "Liberation Serif", serif;
    font-size: 9px;
    font-weight: 700;
    text-anchor: middle;
}

.block-text {
    fill: #fff;
    font-family: "Liberation Serif", "Noto Sans CJK SC", serif;
    font-size: 14px;
    font-weight: 700;
    text-anchor: middle;
}

.block-text .small {
    font-size: 8px;
}

.block-text .scale {
    font-size: 11px;
}

/* 状态栏 */
.message-pane {
    flex: none;
    height: 22px;
    margin-top: 2px;
    border: 1px solid;
    border-color: #a7a6aa #fff #a7a6aa #a7a6aa;
}

.status-bar {
    display: flex;
    align-items: center;
    flex: none;
    gap: 3px;
    height: 19px;
    padding-right: 3px;
    border-top: 2px solid #fff;
    white-space: nowrap;
}

.status-bar .prompt {
    flex: 1;
    padding-left: 2px;
}

.cell {
    height: 16px;
    padding-left: 1px;
    border: 1px solid;
    border-color: #a7a6aa #fff #fff #a7a6aa;
    line-height: 14px;
}

.cell.command {
    width: 79px;
}

.cell.coords {
    width: 231px;
    font-family: "DejaVu Sans Condensed", "DejaVu Sans", sans-serif;
    font-size: 11px;
}

.cell.point {
    width: 54px;
}

.combo.snap {
    width: 50px;
    height: 17px;
    border: 1px solid #a7a6aa;
}

.combo.snap::after {
    top: 1px;
}

/* 任务栏 */
.taskbar {
    display: flex;
    align-items: center;
    flex: none;
    height: 30px;
    border-top: 1px solid #1d4fae;
    background: linear-gradient(#8cbcf2 0, #6aa2e6 3px, #5a92de 9px, #3a70cc 16px, #2a58b4 24px, #2448a0);
    color: #fff;
}

.taskbar .ic {
    stroke: none;
}

.start {
    display: flex;
    align-items: center;
    align-self: stretch;
    flex: none;
    gap: 6px;
    width: 100px;
    padding-left: 11px;
    border-radius: 0 10px 12px 0;
    background: linear-gradient(#8fd08c 0, #4fae50 4px, #38963a 13px, #1a7c1e 16px, #22a825 23px, #1cb020);
    box-shadow: inset -1px 0 1px #b0e0b0;
    font-size: 20px;
    font-style: italic;
    line-height: 26px;
    text-shadow: 1px 1px 1px #145214;
}

.start .ic {
    width: 19px;
    height: 19px;
}

.quick-launch {
    display: flex;
    align-items: center;
    flex: none;
    gap: 7px;
    width: 103px;
    padding-left: 11px;
}

.quick-launch .more {
    margin: -12px 0 0 4px;
    font-size: 14px;
    font-weight: 700;
}

.tasks {
    display: flex;
    flex: 1;
    gap: 2px;
    min-width: 0;
    max-width: 624px;
}

.tasks button {
    display: flex;
    align-items: center;
    flex: 1;
    gap: 5px;
    min-width: 0;
    height: 24px;
    padding: 0 2px 0 8px;
    border: 1px solid #2f62ba;
    border-radius: 3px;
    background: linear-gradient(#6aa0e8, #4a82d6 45%, #3464c0 75%, #3a70cc);
    white-space: nowrap;
}

.tasks .current {
    border-color: #12306e;
    background: linear-gradient(#14387c, #1c4690 60%, #2450a0);
}

.ime {
    flex: none;
    margin-left: 13px;
}

.tray {
    display: flex;
    align-items: center;
    align-self: stretch;
    flex: none;
    gap: 2px;
    width: 147px;
    margin-left: auto;
    padding-left: 11px;
    background: linear-gradient(#b8dcfa 0, #98c6f4 4px, #86b8ee 14px, #6a9ee2 22px, #5c90d8);
    color: #000;
}

.tray time {
    margin-left: 5px;
    font-family: "DejaVu Sans Condensed", "DejaVu Sans", sans-serif;
    font-size: 11px;
}
```
